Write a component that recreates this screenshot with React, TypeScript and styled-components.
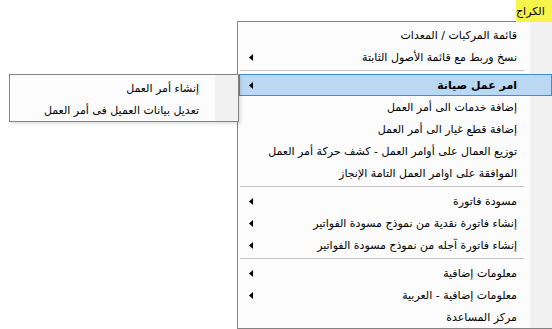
import React from 'react';
import styled, { createGlobalStyle } from 'styled-components';

const GlobalStyle = createGlobalStyle`
    html, body {
        margin: 0;
        padding: 0;
        background: #ffffff;
        overflow: hidden;
    }
    body {
        font-family: Tahoma, "DejaVu Sans", sans-serif;
        font-size: 11px;
        color: #000;
    }
`;

const Page = styled.div`
    position: relative;
    width: 552px;
    height: 329px;
    overflow: hidden;
    background: #ffffff;
`;

const MenuBar = styled.div`
    position: relative;
    z-index: 2;
    display: flex;
    justify-content: flex-end;
    height: 22px;
`;

const BarItem = styled.div<{ $open?: boolean }>`
    display: flex;
    align-items: center;
    justify-content: flex-end;
    height: 22px;
    padding: 0 5px 0 0;
    width: 36px;
    box-sizing: border-box;
    direction: rtl;
    background: ${(p) => (p.$open ? '#f5f54c' : 'transparent')};
    white-space: nowrap;
`;

// RTL popup menu: the icon gutter sits on the right side
const Menu = styled.div<{ $width: number }>`
    box-sizing: border-box;
    width: ${(p) => p.$width}px;
    direction: rtl;
    border: 1px solid #838383;
    padding: 2px 1px 0;
    background: linear-gradient(to left, #f1f1f1 0, #f1f1f1 23px, #fcfcfc 23px);
    display: flex;
    flex-direction: column;
`;

const DropMenu = styled(Menu)`
    position: absolute;
    left: 237px;
    top: 21px;
    z-index: 1;
`;

const SubMenu = styled(Menu)`
    position: absolute;
    right: calc(100% + 1px);
    top: -1px;
    font-weight: normal;
    box-shadow: 2px 2px 3px rgba(0, 0, 0, 0.12);
`;

const Item = styled.div<{ $active?: boolean; $bold?: boolean }>`
    position: relative;
    display: flex;
    align-items: center;
    justify-content: space-between;
    height: 22px;
    box-sizing: border-box;
    padding: 0 34px 0 9px;
    border: 1px solid ${(p) => (p.$active ? '#3c8de0' : 'transparent')};
    background: ${(p) => (p.$active ? '#bad7f4' : 'transparent')};
    font-weight: ${(p) => (p.$bold ? 'bold' : 'normal')};
    white-space: nowrap;
`;

const SubItem = styled(Item)`
    padding-right: 37px;
`;

const Separator = styled.div`
    height: 1px;
    background: #c3c3c3;
    margin: 2px 28px 3px 1px;
`;

const Arrow = () => (
    <svg width="4" height="7" viewBox="0 0 4 7">
        <polygon points="4,0 4,7 0,3.5" fill="#000" />
    </svg>
);

type TEntry = { label: string; sub?: boolean; bold?: boolean; active?: boolean } | 'sep';

const entries: TEntry[] = [
    { label: 'قائمة المركبات / المعدات' },
    { label: 'نسخ وربط مع قائمة الأصول الثابتة', sub: true },
    'sep',
    { label: 'امر عمل صيانة', sub: true, bold: true, active: true },
    { label: 'إضافة خدمات الى أمر العمل' },
    { label: 'إضافة قطع غيار الى أمر العمل' },
    { label: 'توزيع العمال على أوامر العمل - كشف حركة أمر العمل' },
    { label: 'الموافقة على اوامر العمل التامة الإنجاز' },
    'sep',
    { label: 'مسودة فاتورة', sub: true },
    { label: 'إنشاء فاتورة نقدية من نموذج مسودة الفواتير', sub: true },
    { label: 'إنشاء فاتورة آجله من نموذج مسودة الفواتير', sub: true },
    'sep',
    { label: 'معلومات إضافية', sub: true },
    { label: 'معلومات إضافية - العربية', sub: true },
    { label: 'مركز المساعدة' },
];

const subEntries = ['إنشاء أمر العمل', 'تعديل بيانات العميل فى أمر العمل'];

export default function App() {
    return (
        <Page>
            <GlobalStyle />
            <MenuBar>
                <BarItem $open>الكراج</BarItem>
            </MenuBar>
            <DropMenu $width={317}>
                {entries.map((e, i) => {
                    if (e === 'sep') {
                        return <Separator key={i} />;
                    }
                    return (
                        <Item key={i} $active={e.active} $bold={e.bold}>
                            <span>{e.label}</span>
                            {e.sub && <Arrow />}
                            {e.active && (
                                <SubMenu $width={230}>
                                    {subEntries.map((s) => (
                                        <SubItem key={s}>
                                            <span>{s}</span>
                                        </SubItem>
                                    ))}
                                </SubMenu>
                            )}
                        </Item>
                    );
                })}
            </DropMenu>
        </Page>
    );
}
